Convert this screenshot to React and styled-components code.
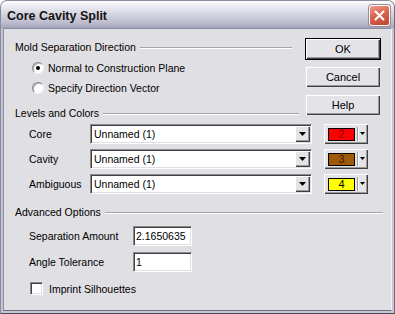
import React from "react";
import styled, { createGlobalStyle } from "styled-components";

const GlobalStyle = createGlobalStyle`
  html, body {
    margin: 0;
    padding: 0;
    background: #fff;
  }
  body {
    font-family: "Liberation Sans", Arial, sans-serif;
  }
  * {
    box-sizing: border-box;
  }
`;

const levels = [
  { label: "Core", value: "Unnamed (1)", color: "#ff0000", ink: "#7a0000", num: 2 },
  { label: "Cavity", value: "Unnamed (1)", color: "#a05a06", ink: "#3a1c00", num: 3 },
  { label: "Ambiguous", value: "Unnamed (1)", color: "#ffff00", ink: "#000", num: 4 },
];

const DownArrow = ({ w = 7, h = 4 }) => (
  <svg width={w} height={h} viewBox={`0 0 ${w} ${h}`}>
    <polygon points={`0,0 ${w},0 ${w / 2},${h}`} fill="#000" />
  </svg>
);

const App = () => {
  return (
    <>
      <GlobalStyle />
      <Window>
        <TitleBar>
          <Title>Core Cavity Split</Title>
          <CloseButton>
            <svg width="11" height="11" viewBox="0 0 11 11">
              <path d="M1.5 1.5 L9.5 9.5 M9.5 1.5 L1.5 9.5" stroke="#fff" strokeWidth="2" strokeLinecap="round" />
            </svg>
          </CloseButton>
        </TitleBar>
        <Client>
          <TopArea>
            <LeftCol>
              <GroupHeader>
                <span>Mold Separation Direction</span>
                <Line />
              </GroupHeader>
              <RadioList>
                <RadioRow>
                  <Radio $checked />
                  <span>Normal to Construction Plane</span>
                </RadioRow>
                <RadioRow>
                  <Radio />
                  <span>Specify Direction Vector</span>
                </RadioRow>
              </RadioList>
              <GroupHeader $gap={8} $extend={7}>
                <span>Levels and Colors</span>
                <Line />
              </GroupHeader>
            </LeftCol>
            <ButtonCol>
              <Button $default>OK</Button>
              <Button>Cancel</Button>
              <Button>Help</Button>
            </ButtonCol>
          </TopArea>

          <LevelRows>
            {levels.map((lv) => (
              <LevelRow key={lv.label}>
                <RowLabel $width={61}>{lv.label}</RowLabel>
                <Combo>
                  <ComboText>{lv.value}</ComboText>
                  <ArrowButton>
                    <DownArrow />
                  </ArrowButton>
                </Combo>
                <SwatchButton>
                  <Swatch $color={lv.color} $ink={lv.ink}>
                    {lv.num}
                  </Swatch>
                  <SwatchSep />
                  <SwatchArrow>
                    <DownArrow w={5} h={3} />
                  </SwatchArrow>
                </SwatchButton>
              </LevelRow>
            ))}
          </LevelRows>

          <GroupHeader $gap={11} $right={8}>
            <span>Advanced Options</span>
            <Line />
          </GroupHeader>

          <FieldRows>
            <FieldRow>
              <RowLabel $width={104}>Separation Amount</RowLabel>
              <TextBox>2.1650635</TextBox>
            </FieldRow>
            <FieldRow>
              <RowLabel $width={104}>Angle Tolerance</RowLabel>
              <TextBox>1</TextBox>
            </FieldRow>
          </FieldRows>

          <CheckRow>
            <CheckBox />
            <span>Imprint Silhouettes</span>
          </CheckRow>
        </Client>
      </Window>
    </>
  );
};

const Window = styled.div`
  width: 395px;
  height: 314px;
  display: flex;
  flex-direction: column;
  background: #c4c4d2;
  border: 1px solid;
  border-color: #8a8a9e #6e6e80 #4c4c5c #8a8a9e;
  border-radius: 7px 7px 0 0;
  overflow: hidden;
`;

const TitleBar = styled.div`
  height: 27px;
  flex: none;
  display: flex;
  align-items: center;
  justify-content: space-between;
  padding: 2px 4px 0 6px;
  background: linear-gradient(#fdfdfe 0%, #ebebf1 20%, #d0d0dc 55%, #b8b8ca 85%, #a2a2b8 100%);
`;

const Title = styled.div`
  font-family: "Liberation Sans", Arial, sans-serif;
  font-weight: bold;
  font-size: 12.5px;
  color: #141414;
`;

const CloseButton = styled.div`
  width: 21px;
  height: 21px;
  border: 1px solid #fff;
  border-radius: 3px;
  background: linear-gradient(160deg, #ee9c8c 0%, #d86652 45%, #c0432e 100%);
  box-shadow: 0 0 0 1px #9b8a96;
  display: flex;
  align-items: center;
  justify-content: center;
`;

const Client = styled.div`
  flex: 1;
  margin: 0 2px 2px 2px;
  background: #e0dfe3;
  border: 1px solid;
  border-color: #8e8ea2 #f4f4f8 #6c6c7c #8e8ea2;
  display: flex;
  flex-direction: column;
  font-size: 10.5px;
  color: #000;
`;

const TopArea = styled.div`
  display: flex;
  align-items: flex-start;
`;

const LeftCol = styled.div`
  flex: 1;
  padding-top: 11px;
  display: flex;
  flex-direction: column;
`;

const GroupHeader = styled.div`
  height: 14px;
  display: flex;
  align-items: center;
  padding-left: 11px;
  margin-top: ${(p) => p.$gap || 0}px;
  margin-right: ${(p) => (p.$extend ? -p.$extend : p.$right || 0)}px;
  white-space: nowrap;
`;

const Line = styled.div`
  flex: 1;
  margin-left: 4px;
  margin-top: 1px;
  border-top: 1px solid #a4a4b0;
  border-bottom: 1px solid #fff;
`;

const RadioList = styled.div`
  margin-top: 4px;
  padding-left: 28px;
  display: flex;
  flex-direction: column;
`;

const RadioRow = styled.div`
  height: 20px;
  display: flex;
  align-items: center;
  gap: 4px;
`;

const Radio = styled.div`
  width: 12px;
  height: 12px;
  border-radius: 50%;
  background: #fff;
  border: 1px solid;
  border-color: #8a8a8a #f0f0f0 #f0f0f0 #8a8a8a;
  box-shadow: inset 1px 1px 0 #b0b0b0;
  display: flex;
  align-items: center;
  justify-content: center;

  &::after {
    content: "";
    width: 4px;
    height: 4px;
    border-radius: 50%;
    background: ${(p) => (p.$checked ? "#000" : "transparent")};
  }
`;

const ButtonCol = styled.div`
  width: 76px;
  margin: 9px 10px 0 13px;
  display: flex;
  flex-direction: column;
  gap: 6px;
`;

const Button = styled.div`
  height: 22px;
  display: flex;
  align-items: center;
  justify-content: center;
  background: #e4e3e7;
  border: 1px solid ${(p) => (p.$default ? "#000" : "transparent")};
  box-shadow: inset 1px 1px #fff, inset -1px -1px #404040, inset -2px -2px #9a9a9a;
  font-size: 11px;
`;

const LevelRows = styled.div`
  margin-top: 4px;
  padding-left: 25px;
  display: flex;
  flex-direction: column;
  gap: 5px;
`;

const LevelRow = styled.div`
  height: 20px;
  display: flex;
  align-items: center;
`;

const RowLabel = styled.div`
  width: ${(p) => p.$width}px;
  flex: none;
`;

const sunken = `
  background: #fff;
  border: 1px solid;
  border-color: #8a8a8a #fff #fff #8a8a8a;
  box-shadow: inset 1px 1px #404040, inset -1px -1px #e0dfe3;
`;

const Combo = styled.div`
  width: 222px;
  height: 20px;
  ${sunken}
  display: flex;
  align-items: center;
  padding: 1px 1px 1px 3px;
`;

const ComboText = styled.div`
  flex: 1;
`;

const ArrowButton = styled.div`
  width: 15px;
  height: 16px;
  background: #e4e3e7;
  box-shadow: inset 1px 1px #fff, inset -1px -1px #404040, inset -2px -2px #9a9a9a;
  display: flex;
  align-items: center;
  justify-content: center;
  padding-bottom: 1px;
`;

const SwatchButton = styled.div`
  width: 44px;
  height: 20px;
  margin-left: 12px;
  background: #e4e3e7;
  box-shadow: inset 1px 1px #fff, inset -1px -1px #404040, inset -2px -2px #9a9a9a;
  display: flex;
  align-items: center;
  padding: 0 2px 0 4px;
`;

const Swatch = styled.div`
  width: 27px;
  height: 13px;
  background: ${(p) => p.$color};
  border: 1px solid #000;
  color: ${(p) => p.$ink};
  font-size: 11px;
  line-height: 1;
  display: flex;
  align-items: center;
  justify-content: center;
`;

const SwatchSep = styled.div`
  width: 2px;
  height: 14px;
  margin-left: 2px;
  border-left: 1px solid #9a9a9a;
  border-right: 1px solid #fff;
`;

const SwatchArrow = styled.div`
  flex: 1;
  display: flex;
  align-items: center;
  justify-content: center;
  padding-bottom: 1px;
`;

const FieldRows = styled.div`
  margin-top: 7px;
  padding-left: 25px;
  display: flex;
  flex-direction: column;
  gap: 6px;
`;

const FieldRow = styled.div`
  height: 20px;
  display: flex;
  align-items: center;
`;

const TextBox = styled.div`
  width: 59px;
  height: 20px;
  ${sunken}
  display: flex;
  align-items: center;
  padding-left: 2px;
`;

const CheckRow = styled.div`
  margin-top: 10px;
  padding-left: 26px;
  height: 13px;
  display: flex;
  align-items: center;
  gap: 6px;
`;

const CheckBox = styled.div`
  width: 13px;
  height: 13px;
  ${sunken}
`;

export default App;
